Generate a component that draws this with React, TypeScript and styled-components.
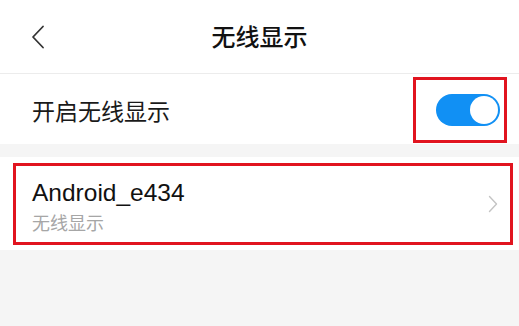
import { FC } from 'react';
import styled, { createGlobalStyle } from 'styled-components';

const GlobalStyle = createGlobalStyle`
  html, body {
    margin: 0;
    padding: 0;
    background: #f5f5f5;
    font-family: "Liberation Sans", "Noto Sans CJK SC", sans-serif;
  }
`;

const App: FC = (): JSX.Element => {
  return (
    <Page>
      <GlobalStyle />
      <Header>
        <BackButton aria-label="back">
          <svg width="14" height="24" viewBox="0 0 14 24" fill="none">
            <path d="M12 1.5 L2 12 L12 22.5" stroke="#333" strokeWidth="1.8" strokeLinecap="round" strokeLinejoin="round" />
          </svg>
        </BackButton>
        <Title>无线显示</Title>
      </Header>

      <SwitchRow>
        <Label>开启无线显示</Label>
        <Highlight $variant="switch">
          <Toggle $on>
            <Knob />
          </Toggle>
        </Highlight>
      </SwitchRow>

      <DeviceSection>
        <Highlight $variant="row">
          <DeviceInfo>
            <DeviceName>Android_e434</DeviceName>
            <DeviceSub>无线显示</DeviceSub>
          </DeviceInfo>
          <svg width="10" height="18" viewBox="0 0 10 18" fill="none">
            <path d="M1.5 1.5 L8.5 9 L1.5 16.5" stroke="#c4c4c4" strokeWidth="1.4" strokeLinecap="round" strokeLinejoin="round" />
          </svg>
        </Highlight>
      </DeviceSection>
    </Page>
  );
};

const Page = styled.div`
  min-height: 100vh;
  background: #f5f5f5;
`;

const Header = styled.header`
  position: relative;
  height: 73px;
  background: #fff;
  border-bottom: 1px solid #ececec;
  display: flex;
  align-items: center;
  justify-content: center;
`;

const BackButton = styled.div`
  position: absolute;
  left: 31px;
  top: 25px;
  width: 14px;
  height: 24px;
`;

const Title = styled.h1`
  margin: 0;
  margin-top: -2px;
  font-size: 24px;
  font-weight: 500;
  color: #111;
  font-family: "Noto Sans CJK SC", sans-serif;
`;

const SwitchRow = styled.div`
  height: 70px;
  background: #fff;
  display: flex;
  align-items: center;
  justify-content: space-between;
  padding: 0 12px 0 32px;
  margin-bottom: 13px;
`;

const Label = styled.span`
  font-size: 23px;
  color: #1a1a1a;
  font-family: "Noto Sans CJK SC", sans-serif;
  margin-top: 2px;
`;

const Highlight = styled.div<{ $variant: 'switch' | 'row' }>`
  border: 3px solid #e1141f;
  display: flex;
  align-items: center;
  box-sizing: border-box;
  ${({ $variant }) =>
    $variant === 'switch'
      ? `
    width: 94px;
    height: 66px;
    padding: 0 4px 0 20px;
    margin-top: 2px;
  `
      : `
    height: 82px;
    padding: 0 12px 0 16px;
    justify-content: space-between;
  `}
`;

const Toggle = styled.div<{ $on?: boolean }>`
  width: 64px;
  height: 32px;
  border-radius: 16px;
  background: ${({ $on }) => ($on ? '#1190f4' : '#ddd')};
  display: flex;
  align-items: center;
  justify-content: ${({ $on }) => ($on ? 'flex-end' : 'flex-start')};
  padding: 0 2px;
  box-sizing: border-box;
`;

const Knob = styled.div`
  width: 28px;
  height: 28px;
  border-radius: 50%;
  background: #fff;
`;

const DeviceSection = styled.div`
  background: #fff;
  padding: 6px 6px 5px 13px;
`;

const DeviceInfo = styled.div`
  display: flex;
  flex-direction: column;
  margin-top: 4px;
`;

const DeviceName = styled.span`
  font-size: 24.5px;
  color: #111;
  line-height: 30px;
`;

const DeviceSub = styled.span`
  font-size: 18px;
  color: #a6a6a6;
  line-height: 24px;
  margin-top: 2px;
  font-family: "Noto Sans CJK SC", sans-serif;
`;

export default App;
